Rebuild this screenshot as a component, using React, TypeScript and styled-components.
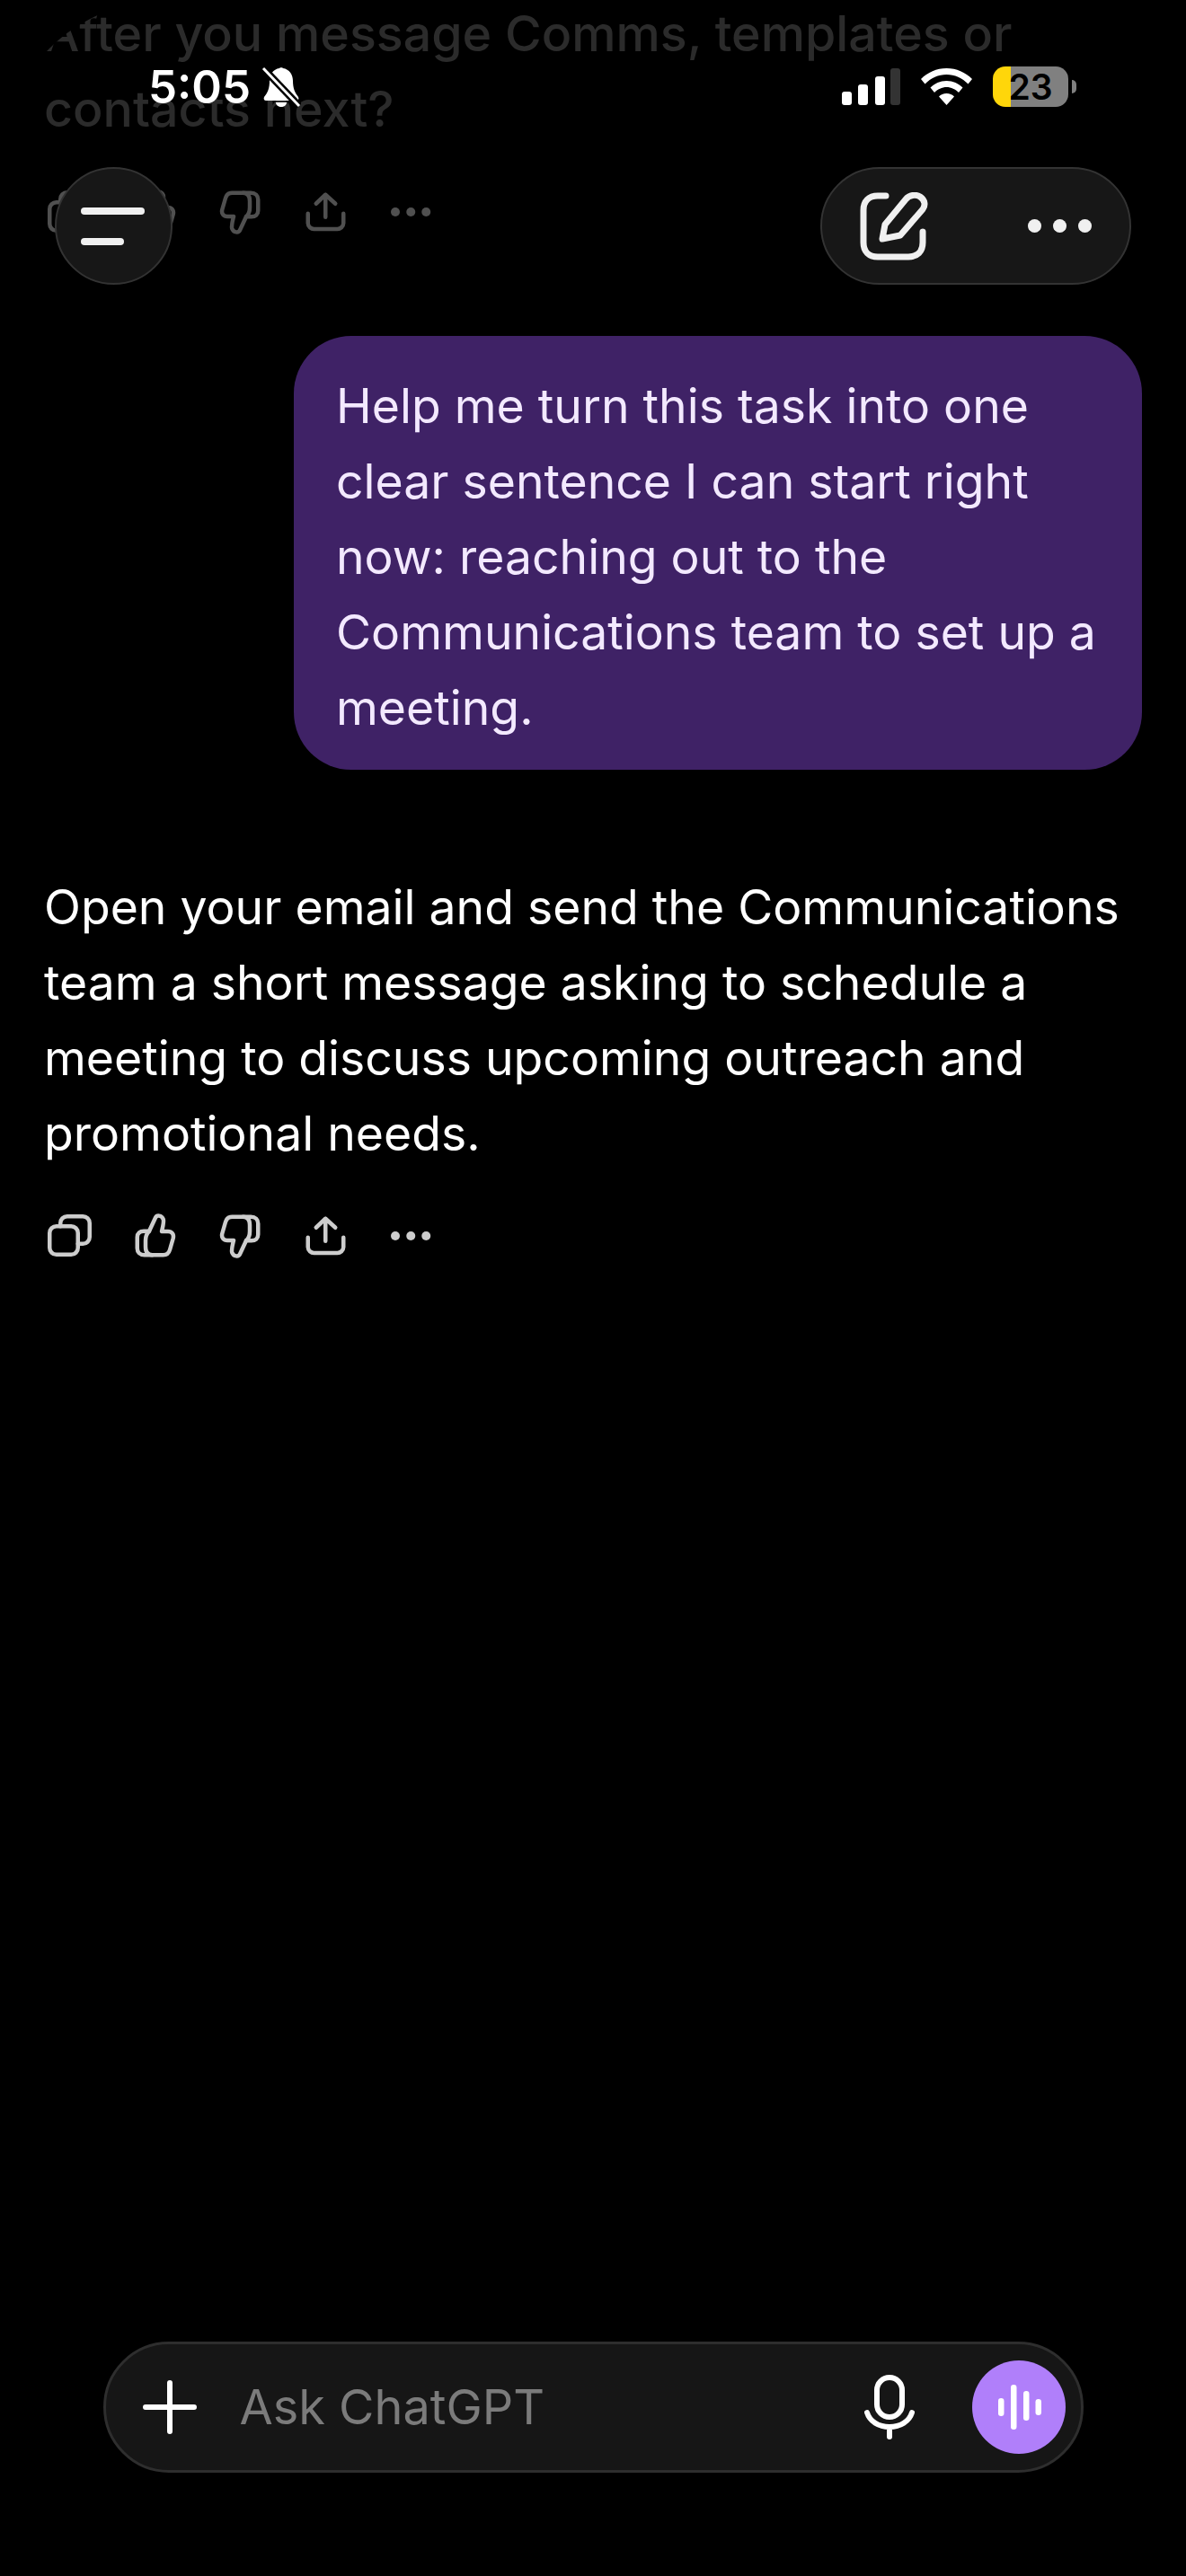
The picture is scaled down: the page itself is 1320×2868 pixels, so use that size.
import styled, { createGlobalStyle } from 'styled-components';

const GlobalStyle = createGlobalStyle`
  html, body {
    margin: 0;
    background: #000;
  }
`;

const Screen = styled.div`
  position: relative;
  display: flex;
  flex-direction: column;
  width: 1320px;
  height: 2868px;
  padding: 0 49px 115px;
  box-sizing: border-box;
  overflow: hidden;
  border-radius: 186px;
  background: #000;
  color: #fff;
  font-family: Inter, "Liberation Sans", sans-serif;
  font-size: 53.5px;
  line-height: 84px;
`;

const FadedText = styled.div`
  margin-top: -5px;
  color: #2b2b2b;
  font-size: 55.5px;
  font-weight: 500;
`;

const ActionRow = styled.div<{ $faded?: boolean }>`
  display: flex;
  gap: 35px;
  height: 60px;
  margin-top: ${(p) => (p.$faded ? '43px' : '42px')};
  margin-left: -2px;
  color: ${(p) => (p.$faded ? '#505050' : '#cdcdcd')};
`;

const ActionIcon = styled.svg`
  display: block;
  width: 60px;
  height: 60px;
  fill: none;
  stroke: currentColor;
  stroke-width: 1.8;
  stroke-linecap: round;
  stroke-linejoin: round;
`;

const Bubble = styled.div`
  align-self: flex-end;
  width: 944px;
  box-sizing: border-box;
  margin-top: 108px;
  padding: 36px 40px 27px 47px;
  border-radius: 64px;
  background: #3f2266;
  color: #f3e9ff;
`;

const Reply = styled.div`
  margin-top: 111px;
`;

const Composer = styled.div`
  display: flex;
  align-items: center;
  align-self: center;
  width: 1091px;
  height: 146px;
  margin-top: auto;
  padding: 0 17px 0 41px;
  box-sizing: border-box;
  border: 3px solid #2e2e2e;
  border-radius: 73px;
  background: #161616;
`;

const Placeholder = styled.div`
  flex: 1;
  margin-left: 48px;
  color: #7b7b7b;
  font-size: 54px;
`;

const VoiceButton = styled.div`
  display: flex;
  align-items: center;
  justify-content: center;
  width: 104px;
  height: 104px;
  margin-left: 64px;
  border-radius: 50%;
  background: #b07ffa;
`;

const StatusBar = styled.div`
  position: absolute;
  top: 74px;
  left: 165px;
  right: 122px;
  display: flex;
  align-items: center;
  height: 45px;
`;

const Clock = styled.div`
  font-size: 51px;
  font-weight: 600;
  line-height: 45px;
  color: #fff;
`;

const BellIcon = styled.svg`
  width: 44px;
  height: 46px;
  margin-left: 12px;
`;

const StatusRight = styled.div`
  display: flex;
  align-items: center;
  gap: 23px;
  margin-left: auto;
`;

const Battery = styled.div`
  position: relative;
  display: flex;
  align-items: center;
  justify-content: center;
  width: 84px;
  height: 45px;
  margin-right: 9px;
  border-radius: 14px;
  background: linear-gradient(90deg, #ffd60a 24%, #808080 24%);
  color: #000;
  font-size: 39px;
  font-weight: 600;
  line-height: 45px;

  &::after {
    content: '';
    position: absolute;
    right: -9px;
    top: 15px;
    width: 5px;
    height: 15px;
    border-radius: 0 8px 8px 0;
    background: #808080;
  }
`;

const MenuButton = styled.div`
  position: absolute;
  top: 186px;
  left: 61px;
  display: flex;
  flex-direction: column;
  gap: 26px;
  justify-content: center;
  width: 131px;
  height: 131px;
  padding-left: 27px;
  box-sizing: border-box;
  border: 2px solid #333;
  border-radius: 50%;
  background: #171717;
`;

const MenuBar = styled.div<{ $short?: boolean }>`
  width: ${(p) => (p.$short ? '48px' : '71px')};
  height: 8px;
  border-radius: 4px;
  background: #f0f0f0;
`;

const ToolPill = styled.div`
  position: absolute;
  top: 186px;
  left: 913px;
  display: flex;
  align-items: center;
  width: 346px;
  height: 131px;
  padding-left: 42px;
  box-sizing: border-box;
  border: 2px solid #333;
  border-radius: 66px;
  background: #171717;
`;

const ToolDots = styled.div`
  display: flex;
  gap: 13px;
  margin-left: 111px;
`;

const ToolDot = styled.div`
  width: 15px;
  height: 15px;
  border-radius: 50%;
  background: #f0f0f0;
`;

const THUMB_OUTLINE =
  'M9.600 9.900 12.400 3.900C13 2.600 15.200 2.700 15.900 4.600 16.300 5.800 15.600 8.200 15.200 10H18C19.700 10 20.700 11.300 20.300 13L18.800 18.200C18.400 19.600 17.400 20.500 15.900 20.500H7.500C5.500 20.500 4.300 19.300 4.300 17.500V12.600C4.300 10.900 5.500 9.900 7.200 9.900H9.600';
const THUMB_INNER = 'M9.600 9.900C8.400 11 8 12.500 8 14V16.800C8 18.900 8.600 20.500 11 20.500';

const CopyIcon = () => (
  <ActionIcon viewBox="0 0 24 24">
    <rect x="3.300" y="7.700" width="12.600" height="12.600" rx="3" />
    <path d="M8.100 7.700V6.300a3 3 0 0 1 3-3h7a3 3 0 0 1 3 3v6.200a3 3 0 0 1-3 3h-2.200" />
  </ActionIcon>
);

const ThumbUpIcon = () => (
  <ActionIcon viewBox="0 0 24 24">
    <path d={THUMB_OUTLINE} />
    <path d={THUMB_INNER} />
  </ActionIcon>
);

const ThumbDownIcon = () => (
  <ActionIcon viewBox="0 0 24 24">
    <g transform="rotate(180 12.200 12)">
      <path d={THUMB_OUTLINE} />
      <path d={THUMB_INNER} />
    </g>
  </ActionIcon>
);

const ShareIcon = () => (
  <ActionIcon viewBox="0 0 24 24">
    <path d="M12.100 14.300V4.300M7.900 8.300l4.200-4 4.400 4" />
    <path d="M4.300 12.700V17a2.700 2.700 0 0 0 2.900 2.600h10a2.700 2.700 0 0 0 2.900-2.600v-4.300" />
  </ActionIcon>
);

const MoreIcon = () => (
  <ActionIcon viewBox="0 0 24 24">
    <circle cx="5.200" cy="12" r="2" fill="currentColor" stroke="none" />
    <circle cx="12.100" cy="12" r="2" fill="currentColor" stroke="none" />
    <circle cx="18.900" cy="12" r="2" fill="currentColor" stroke="none" />
  </ActionIcon>
);

const Actions = ({ faded }: { faded?: boolean }) => (
  <ActionRow $faded={faded}>
    <CopyIcon />
    <ThumbUpIcon />
    <ThumbDownIcon />
    <ShareIcon />
    <MoreIcon />
  </ActionRow>
);

export default function App() {
  return (
    <>
      <GlobalStyle />
      <Screen>
        <FadedText>
          After you message Comms, templates or
          <br />
          contacts next?
        </FadedText>
        <Actions faded />

        <Bubble>
          Help me turn this task into one clear sentence I can start right now: reaching out to the Communications
          team to set up a meeting.
        </Bubble>

        <Reply>
          Open your email and send the Communications team a short message asking to schedule a meeting to discuss
          upcoming outreach and promotional needs.
        </Reply>
        <Actions />

        <Composer>
          <svg width="60" height="60" viewBox="0 0 60 60" fill="none" stroke="#fff" strokeWidth="6" strokeLinecap="round">
            <path d="M30 3v54M3 30h54" />
          </svg>
          <Placeholder>Ask ChatGPT</Placeholder>
          <svg width="56" height="72" viewBox="0 0 56 72" fill="none" stroke="#fff" strokeWidth="6" strokeLinecap="round">
            <rect x="14" y="3" width="28" height="44" rx="14" />
            <path d="M3 42c3 10 13 16 25 16s22-6 25-16M28 58v11" />
          </svg>
          <VoiceButton>
            <svg width="52" height="52" viewBox="0 0 52 52" fill="#fff">
              <rect x="3" y="16" width="6.500" height="20" rx="3.200" />
              <rect x="17" y="1" width="6.500" height="50" rx="3.200" />
              <rect x="31" y="8" width="6.500" height="33" rx="3.200" />
              <rect x="44.500" y="17" width="6.500" height="18" rx="3.200" />
            </svg>
          </VoiceButton>
        </Composer>

        <StatusBar>
          <Clock>5:05</Clock>
          <BellIcon viewBox="0 0 44 46">
            <path d="M24 2c7 1 11 7 11 14 0 8 2 13 6 18 1 2 0 4-2 4H5c-2 0-3-2-2-4 4-5 6-10 6-18 0-7 4-13 11-14 0-1 4-1 4 0Z" fill="#fff" />
            <path d="M16 40h12c0 3-3 5-6 5s-6-2-6-5Z" fill="#fff" />
            <path d="M2 2l40 42" stroke="#000" strokeWidth="8" />
            <path d="M2 2l40 42" stroke="#fff" strokeWidth="3" />
          </BellIcon>
          <StatusRight>
            <svg width="65" height="41" viewBox="0 0 65 41">
              <rect x="0" y="26" width="11" height="15" rx="3" fill="#fff" />
              <rect x="18" y="18" width="11" height="23" rx="3" fill="#fff" />
              <rect x="37" y="9" width="11" height="32" rx="3" fill="#fff" />
              <rect x="54" y="0" width="11" height="41" rx="3" fill="#333" />
            </svg>
            <svg width="57" height="41" viewBox="0 0 57 41" fill="#fff">
              <path d="M28.500 0C39.500 0 49.500 4.500 57 12l-4.500 5.500C46 11 37.500 7 28.500 7S11 11 4.500 17.500L0 12C7.500 4.500 17.500 0 28.500 0Z" />
              <path d="M28.500 14c7 0 13.500 3 18 7.500L42 27c-3.500-3.500-8.500-6-13.500-6S18.500 23.500 15 27l-4.500-5.500C15 17 21.500 14 28.500 14Z" />
              <path d="M28.500 28c3.500 0 6.500 1.500 8.500 3.500L28.500 41 20 31.500c2-2 5-3.500 8.500-3.500Z" />
            </svg>
            <Battery>23</Battery>
          </StatusRight>
        </StatusBar>

        <MenuButton>
          <MenuBar />
          <MenuBar $short />
        </MenuButton>

        <ToolPill>
          <svg width="76" height="76" viewBox="0 0 76 76" fill="none" stroke="#f0f0f0" strokeWidth="7" strokeLinecap="round" strokeLinejoin="round">
            <path d="M29 4H20C10 4 4 10 4 20v36c0 10 6 16 16 16h34c10 0 16-6 16-16V44" />
            <path d="M25 52l3-16L51 8c4-5 11-6 16-3 6 4 6 10 3 14L45 48l-20 4Z" />
          </svg>
          <ToolDots>
            <ToolDot />
            <ToolDot />
            <ToolDot />
          </ToolDots>
        </ToolPill>
      </Screen>
    </>
  );
}
